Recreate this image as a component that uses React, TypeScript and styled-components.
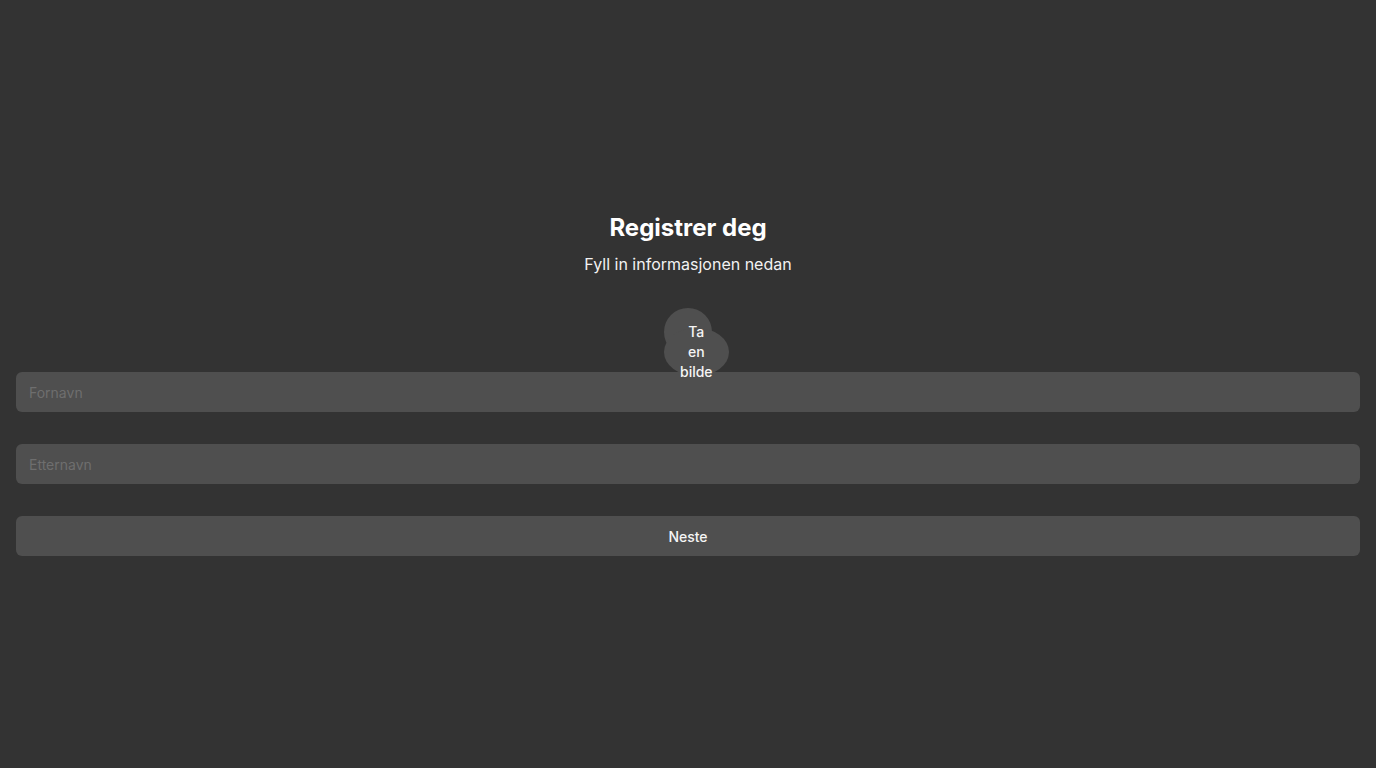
import React from "react";
import styled, { createGlobalStyle } from "styled-components";

const GlobalStyle = createGlobalStyle`
  * { box-sizing: border-box; }
  html, body { margin: 0; padding: 0; background: #333333; }
  body { font-family: Inter, "Noto Sans", sans-serif; color: #f2f2f2; }
`;

const Page = styled.main`
  min-height: 100vh;
  display: flex;
  flex-direction: column;
  justify-content: center;
  padding: 0 16px;
`;

const Header = styled.header`
  display: flex;
  flex-direction: column;
  align-items: center;
  gap: 8px;
`;

const Title = styled.h1`
  margin: 0;
  font-size: 24px;
  line-height: 32px;
  font-weight: 700;
  color: #ffffff;
`;

const Subtitle = styled.p`
  margin: 0;
  font-size: 16px;
  line-height: 24px;
  color: #f2f2f2;
`;

const AvatarRow = styled.div`
  display: flex;
  justify-content: center;
  margin-top: 32px;
  position: relative;
  z-index: 1;
`;

const AvatarCircle = styled.div`
  position: relative;
  width: 48px;
  height: 48px;
  border-radius: 50%;
  background: #4f4f4f;
`;

const CaptureButton = styled.button`
  position: absolute;
  top: 20px;
  left: 0;
  height: 48px;
  width: min-content;
  padding: 0 16px;
  border: none;
  border-radius: 50%;
  background: #4f4f4f;
  color: #f5f5f5;
  font-family: Inter, "Noto Sans", sans-serif;
  font-size: 14px;
  line-height: 20px;
  font-weight: 500;
  display: flex;
  align-items: center;
  justify-content: center;
  text-align: center;
  cursor: pointer;
`;

const Form = styled.form`
  display: flex;
  flex-direction: column;
  gap: 32px;
  margin-top: 16px;
`;

const Input = styled.input`
  width: 100%;
  height: 40px;
  padding: 0 13px;
  border: none;
  border-radius: 6px;
  background: #4f4f4f;
  color: #f2f2f2;
  font-family: Inter, "Noto Sans", sans-serif;
  font-size: 14px;
  outline: none;
  &::placeholder { color: #6e6e6e; }
`;

const SubmitButton = styled.button`
  width: 100%;
  height: 40px;
  border: none;
  border-radius: 6px;
  background: #4f4f4f;
  color: #f5f5f5;
  font-family: Inter, "Noto Sans", sans-serif;
  font-size: 14px;
  font-weight: 500;
  cursor: pointer;
`;

export default function App() {
  return (
    <>
      <GlobalStyle />
      <Page>
        <Header>
          <Title>Registrer deg</Title>
          <Subtitle>Fyll in informasjonen nedan</Subtitle>
        </Header>
        <AvatarRow>
          <AvatarCircle>
            <CaptureButton type="button">Ta en bilde</CaptureButton>
          </AvatarCircle>
        </AvatarRow>
        <Form onSubmit={(e) => e.preventDefault()}>
          <Input placeholder="Fornavn" />
          <Input placeholder="Etternavn" />
          <SubmitButton type="submit">Neste</SubmitButton>
        </Form>
      </Page>
    </>
  );
}
